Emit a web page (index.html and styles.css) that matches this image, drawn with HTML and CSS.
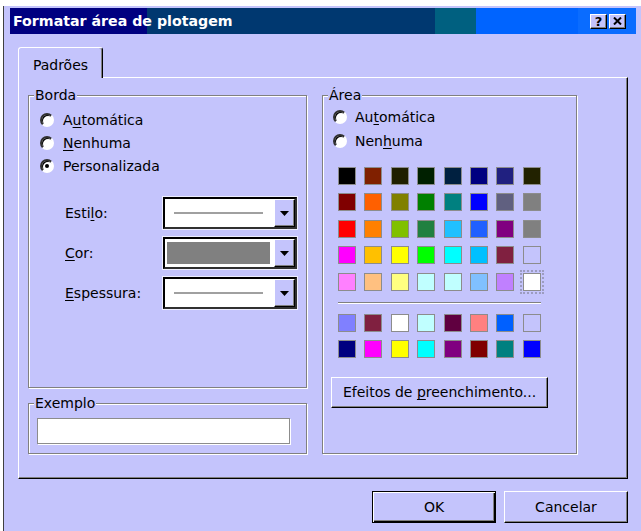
FILE: index.html
```html
<!DOCTYPE html>
<html lang="pt">
<head>
<meta charset="utf-8">
<title>Formatar área de plotagem</title>
<link rel="stylesheet" href="styles.css">
</head>
<body>
<div class="window">
  <div class="titlebar">
    <span class="title">Formatar área de plotagem</span>
    <div class="caption-btns">
      <span class="cbtn help">?</span>
      <span class="cbtn close"><svg width="9" height="8" viewBox="0 0 9 8"><path d="M1 0.5 L8 7.5 M8 0.5 L1 7.5" stroke="#000" stroke-width="2"/></svg></span>
    </div>
  </div>

  <div class="client">
    <div class="tabstrip">
      <div class="tab">Padrões</div>
    </div>

    <div class="panel">
      <div class="col-left">
        <div class="group borda">
          <div class="legend">Borda</div>
          <div class="radios">
            <div class="radio-row"><span class="radio"></span><span>A<u>u</u>tomática</span></div>
            <div class="radio-row"><span class="radio"></span><span><u>N</u>enhuma</span></div>
            <div class="radio-row"><span class="radio checked"></span><span>Personalizada</span></div>
          </div>
          <div class="fields">
            <div class="field">
              <label>Esti<u>l</u>o:</label>
              <div class="combo">
                <div class="combo-value"><span class="line"></span></div>
                <span class="drop"><svg width="9" height="5" viewBox="0 0 9 5"><path d="M0 0 H9 L4.5 5 Z" fill="#000"/></svg></span>
              </div>
            </div>
            <div class="field">
              <label><u>C</u>or:</label>
              <div class="combo">
                <div class="combo-value fill"><span class="color-fill"></span></div>
                <span class="drop"><svg width="9" height="5" viewBox="0 0 9 5"><path d="M0 0 H9 L4.5 5 Z" fill="#000"/></svg></span>
              </div>
            </div>
            <div class="field">
              <label><u>E</u>spessura:</label>
              <div class="combo">
                <div class="combo-value"><span class="line"></span></div>
                <span class="drop"><svg width="9" height="5" viewBox="0 0 9 5"><path d="M0 0 H9 L4.5 5 Z" fill="#000"/></svg></span>
              </div>
            </div>
          </div>
        </div>

        <div class="group exemplo">
          <div class="legend">Exemplo</div>
          <div class="sample"></div>
        </div>
      </div>

      <div class="group area">
        <div class="legend">Área</div>
        <div class="radios">
          <div class="radio-row"><span class="radio"></span><span>Au<u>t</u>omática</span></div>
          <div class="radio-row"><span class="radio"></span><span>Nen<u>h</u>uma</span></div>
        </div>

        <div class="palette">
          <span class="sw" style="background:#000000"></span>
          <span class="sw" style="background:#802000"></span>
          <span class="sw" style="background:#202000"></span>
          <span class="sw" style="background:#002000"></span>
          <span class="sw" style="background:#002040"></span>
          <span class="sw" style="background:#000080"></span>
          <span class="sw" style="background:#202080"></span>
          <span class="sw" style="background:#222200"></span>

          <span class="sw" style="background:#800000"></span>
          <span class="sw" style="background:#ff6000"></span>
          <span class="sw" style="background:#808000"></span>
          <span class="sw" style="background:#008000"></span>
          <span class="sw" style="background:#008080"></span>
          <span class="sw" style="background:#0000ff"></span>
          <span class="sw" style="background:#606080"></span>
          <span class="sw" style="background:#808080"></span>

          <span class="sw" style="background:#ff0000"></span>
          <span class="sw" style="background:#ff8000"></span>
          <span class="sw" style="background:#80c000"></span>
          <span class="sw" style="background:#208040"></span>
          <span class="sw" style="background:#20c0ff"></span>
          <span class="sw" style="background:#2060ff"></span>
          <span class="sw" style="background:#800080"></span>
          <span class="sw" style="background:#808080"></span>

          <span class="sw" style="background:#ff00ff"></span>
          <span class="sw" style="background:#ffc000"></span>
          <span class="sw" style="background:#ffff00"></span>
          <span class="sw" style="background:#00ff00"></span>
          <span class="sw" style="background:#00ffff"></span>
          <span class="sw" style="background:#00c0ff"></span>
          <span class="sw" style="background:#802040"></span>
          <span class="sw" style="background:#c4c4fc"></span>

          <span class="sw" style="background:#ff80ff"></span>
          <span class="sw" style="background:#ffc080"></span>
          <span class="sw" style="background:#ffff80"></span>
          <span class="sw" style="background:#c0ffff"></span>
          <span class="sw" style="background:#c0ffff"></span>
          <span class="sw" style="background:#80c0ff"></span>
          <span class="sw" style="background:#c080ff"></span>
          <span class="sw selected" style="background:#ffffff"></span>
        </div>

        <div class="separator"></div>

        <div class="palette">
          <span class="sw" style="background:#8080ff"></span>
          <span class="sw" style="background:#802040"></span>
          <span class="sw" style="background:#ffffff"></span>
          <span class="sw" style="background:#c0ffff"></span>
          <span class="sw" style="background:#600040"></span>
          <span class="sw" style="background:#ff8080"></span>
          <span class="sw" style="background:#0060ff"></span>
          <span class="sw" style="background:#c4c4fc"></span>

          <span class="sw" style="background:#000080"></span>
          <span class="sw" style="background:#ff00ff"></span>
          <span class="sw" style="background:#ffff00"></span>
          <span class="sw" style="background:#00ffff"></span>
          <span class="sw" style="background:#800080"></span>
          <span class="sw" style="background:#800000"></span>
          <span class="sw" style="background:#008080"></span>
          <span class="sw" style="background:#0000ff"></span>
        </div>

        <button class="btn effects"><span>Efeitos de <u>p</u>reenchimento...</span></button>
      </div>
    </div>

    <div class="actions">
      <button class="btn default">OK</button>
      <button class="btn">Cancelar</button>
    </div>
  </div>
</div>
</body>
</html>
```

FILE: styles.css
```css
html, body {
  margin: 0;
  height: 100%;
  overflow: hidden;
  background: #ffffff;
}

body {
  font-family: "DejaVu Sans", Verdana, sans-serif;
  font-size: 14px;
  line-height: 16px;
  color: #000;
}

u {
  text-decoration: underline;
  text-underline-offset: 2px;
}

/* ---------- window frame ---------- */
.window {
  box-sizing: border-box;
  width: 638px;
  height: 525px;
  margin: 6px 0 0 3px;
  padding: 2px 5px 0 6px;
  border-left: 1px solid #404040;
  background: #c4c4fc;
}

.titlebar {
  height: 26px;
  display: flex;
  align-items: center;
  background: linear-gradient(to right,
    #000080 0 137px,
    #003870 137px 425px,
    #006080 425px 466px,
    #0064ff 466px 568px,
    #0a6cff 568px);
}

.title {
  flex: 1;
  padding-left: 3px;
  color: #fff;
  font-weight: bold;
  font-size: 14.2px;
  white-space: nowrap;
}

.caption-btns {
  display: flex;
  gap: 2px;
  margin-right: 10px;
}

.cbtn {
  box-sizing: border-box;
  width: 17px;
  height: 15px;
  display: flex;
  align-items: center;
  justify-content: center;
  background: #c4c4fc;
  border: 1px solid;
  border-color: #fff #000 #000 #fff;
  box-shadow: inset -1px -1px 0 #808080;
  font-weight: bold;
  font-size: 13px;
  line-height: 13px;
}

/* ---------- client area ---------- */
.client {
  padding: 13px 8px 0;
}

.tabstrip {
  display: flex;
}

.tab {
  position: relative;
  z-index: 1;
  box-sizing: border-box;
  width: 85px;
  height: 31px;
  margin-bottom: -1px;
  padding-top: 4px;
  display: flex;
  align-items: center;
  justify-content: center;
  background: #c4c4fc;
  border: 1px solid;
  border-bottom: none;
  border-color: #fff #000 transparent #fff;
  border-radius: 3px 3px 0 0;
  box-shadow: inset -1px 0 0 #808080;
}

.panel {
  box-sizing: border-box;
  height: 402px;
  padding: 17px 0 0 9px;
  display: flex;
  align-items: flex-start;
  gap: 15px;
  border: 1px solid;
  border-color: #fff #000 #000 #fff;
  box-shadow: inset -1px -1px 0 #808080;
}

/* etched group boxes */
.group {
  box-sizing: border-box;
  border: 1px solid #808080;
  box-shadow: 1px 1px 0 #fff, inset 1px 1px 0 #fff;
}

.legend {
  display: table;
  margin: -9px 0 0 5px;
  padding: 0 1px;
  background: #c4c4fc;
}

.borda {
  width: 279px;
  height: 293px;
}

.exemplo {
  width: 279px;
  height: 51px;
  margin-top: 15px;
}

.area {
  width: 255px;
  height: 359px;
}

/* radio buttons */
.radios {
  margin-top: 5px;
  padding-left: 11px;
}

.radio-row {
  height: 23px;
  display: flex;
  align-items: center;
  gap: 9px;
}

.area .radios {
  margin-top: 2px;
  padding-left: 10px;
}

.area .radio-row {
  height: 24px;
  gap: 8px;
}

.radio {
  box-sizing: border-box;
  width: 14px;
  height: 14px;
  flex: none;
  display: flex;
  align-items: center;
  justify-content: center;
  border-radius: 50%;
  background: #fff;
  border: 2px solid;
  border-color: #303030 #fff #fff #303030;
  box-shadow: inset 1px 1px 0 #000;
}

.radio.checked::after {
  content: "";
  width: 4px;
  height: 4px;
  border-radius: 50%;
  background: #000;
}

/* style / color / weight fields */
.fields {
  margin-top: 20px;
  padding-left: 36px;
  display: flex;
  flex-direction: column;
  gap: 8px;
}

.field {
  height: 32px;
  display: flex;
  align-items: center;
}

.field label {
  width: 98px;
}

.combo {
  box-sizing: border-box;
  width: 134px;
  height: 32px;
  display: flex;
  background: #fff;
  border: 2px solid;
  border-color: #000 #303030 #303030 #000;
  box-shadow: 0 0 0 1px #eeeeff;
}

.combo-value {
  flex: 1;
  display: flex;
  align-items: center;
  padding: 0 11px 0 9px;
}

.line {
  flex: 1;
  height: 2px;
  background: #a0a0a0;
}

.combo-value.fill {
  align-items: stretch;
  padding: 3px 4px 3px 2px;
}

.color-fill {
  flex: 1;
  background: #808080;
}

.drop {
  box-sizing: border-box;
  width: 21px;
  display: flex;
  align-items: center;
  justify-content: center;
  background: #c4c4fc;
  border: 1px solid;
  border-color: #fff #000 #000 #fff;
  box-shadow: inset -1px -1px 0 #808080;
}

/* sample box */
.sample {
  box-sizing: border-box;
  width: 253px;
  height: 26px;
  margin: 7px 0 0 8px;
  background: #fff;
  border: 1px solid #8c8c8c;
  box-shadow: 1px 1px 0 #fff;
}

/* colour palette */
.palette {
  display: grid;
  grid-template-columns: repeat(8, 18px);
  grid-auto-rows: 18px;
  gap: 8.4px;
  margin-left: 15px;
}

.area .radios + .palette {
  margin-top: 14px;
}

.sw {
  box-sizing: border-box;
  border: 1px solid #8c8c8c;
}

.sw.selected {
  outline: 2px dotted #9c9cc0;
  outline-offset: 1px;
}

.separator {
  width: 203px;
  margin: 11px 0 10px 15px;
  border-top: 1px solid #808080;
  border-bottom: 1px solid #fff;
}

/* push buttons */
.btn {
  box-sizing: border-box;
  display: flex;
  align-items: center;
  justify-content: center;
  padding: 0;
  font: inherit;
  color: #000;
  background: #c4c4fc;
  border: 1px solid;
  border-color: #fff #000 #000 #fff;
  box-shadow: inset -1px -1px 0 #808080;
}

.effects {
  width: 217px;
  height: 31px;
  margin: 19px 0 0 8px;
  white-space: nowrap;
}

.actions {
  margin-top: 12px;
  display: flex;
  justify-content: flex-end;
  gap: 8px;
}

.actions .btn {
  width: 124px;
  height: 32px;
}

.btn.default {
  border: 1px solid #000;
  box-shadow: inset 1px 1px 0 #fff, inset -1px -1px 0 #000, inset -2px -2px 0 #808080;
}
```
